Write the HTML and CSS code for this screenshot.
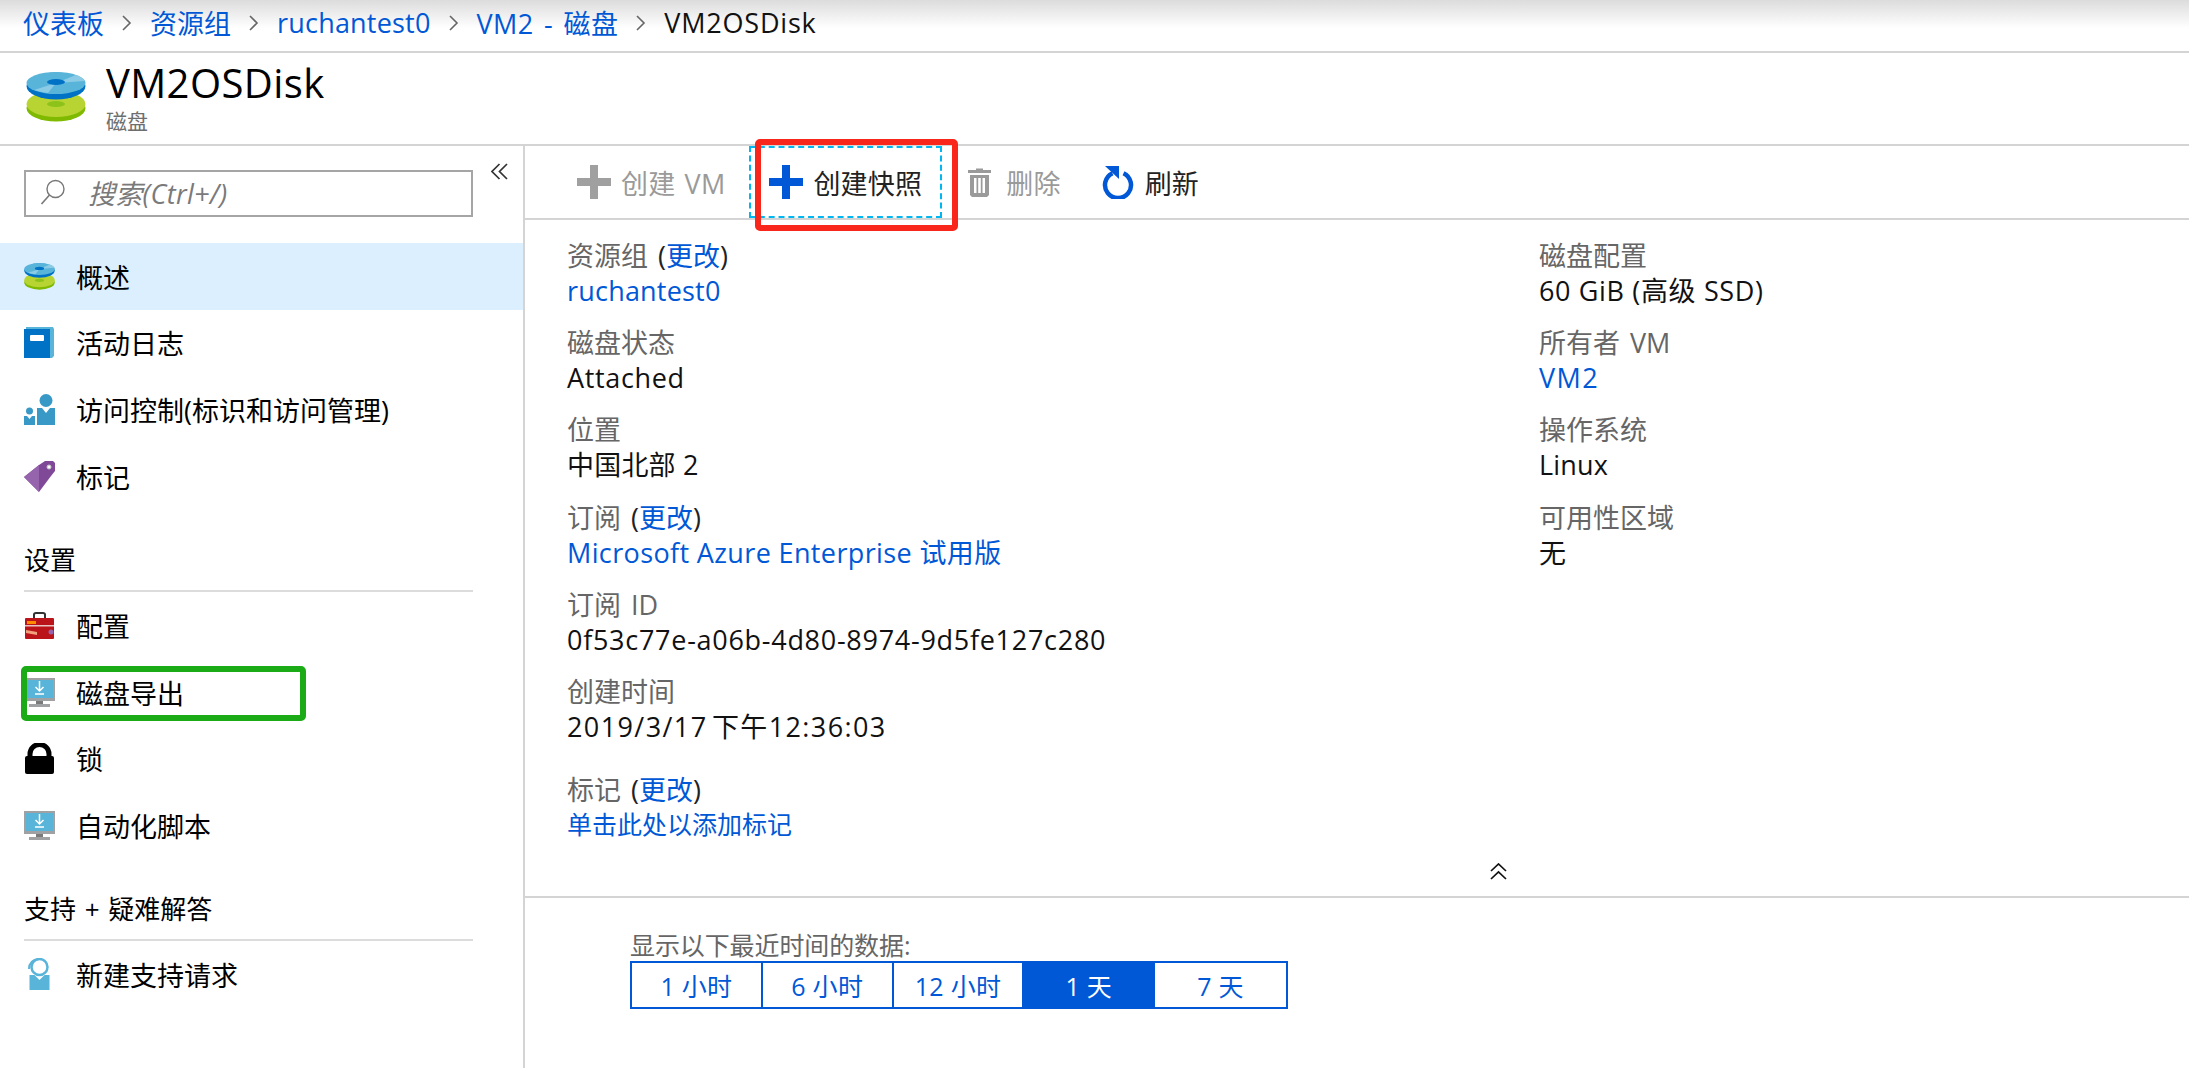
FILE: index.html
```html
<!DOCTYPE html>
<html lang="zh-CN">
<head>
<meta charset="utf-8">
<title>VM2OSDisk</title>
<link rel="stylesheet" href="styles.css">
</head>
<body>
<svg class="defs" width="0" height="0" aria-hidden="true">
  <symbol id="i-disk" viewBox="0 0 60 50">
    <ellipse cx="30" cy="36" rx="29.5" ry="13.5" fill="#7fba00"/>
    <ellipse cx="30" cy="32" rx="29.5" ry="13" fill="#b8d432"/>
    <ellipse cx="30" cy="32" rx="9" ry="3" fill="#8cc21a"/>
    <ellipse cx="30" cy="14" rx="29.5" ry="13.5" fill="#0072c6"/>
    <ellipse cx="30" cy="11" rx="29.5" ry="11" fill="#59b4d9"/>
    <path d="M30 11 50 3a30 11 0 0 1 9 6zM30 11 8 18a30 11 0 0 0 14 3z" fill="#8bcbe6"/>
    <ellipse cx="30" cy="10" rx="9" ry="3" fill="#0072c6"/>
  </symbol>
  <symbol id="i-monitor" viewBox="0 0 31 29">
    <rect width="31" height="23" fill="#a0a1a2"/>
    <rect x="2" y="2" width="27" height="18" fill="#59b4d9"/>
    <path d="M15.5 3v9M11.5 9l4 4 4-4M11 16h9" fill="none" stroke="#fff" stroke-width="1.5"/>
    <rect x="12" y="23" width="7" height="3" fill="#7a7a7a"/>
    <rect x="5" y="26" width="21" height="3" fill="#a0a1a2"/>
  </symbol>
</svg>
<div class="page">
  <nav class="crumbs">
    <a>仪表板</a><span class="sep"><svg width="10" height="16" viewBox="0 0 10 16"><path d="M1 1l7 7-7 7" fill="none" stroke="#666" stroke-width="1.6"/></svg></span>
    <a>资源组</a><span class="sep"><svg width="10" height="16" viewBox="0 0 10 16"><path d="M1 1l7 7-7 7" fill="none" stroke="#666" stroke-width="1.6"/></svg></span>
    <a class="latin">ruchantest0</a><span class="sep"><svg width="10" height="16" viewBox="0 0 10 16"><path d="M1 1l7 7-7 7" fill="none" stroke="#666" stroke-width="1.6"/></svg></span>
    <a class="mixed">VM2 - 磁盘</a><span class="sep"><svg width="10" height="16" viewBox="0 0 10 16"><path d="M1 1l7 7-7 7" fill="none" stroke="#666" stroke-width="1.6"/></svg></span>
    <span class="current">VM2OSDisk</span>
  </nav>
  <header class="head">
    <svg class="head-icon" width="60" height="50"><use href="#i-disk"/></svg>
    <div class="head-text">
      <h1>VM2OSDisk</h1>
      <div class="sub">磁盘</div>
    </div>
  </header>
  <div class="main">
    <aside class="side">
      <div class="search-row">
        <div class="search">
          <svg width="26" height="26" viewBox="0 0 26 26"><circle cx="15.5" cy="10" r="8.5" fill="none" stroke="#777" stroke-width="1.4"/><path d="M9.5 16 1.5 25" stroke="#777" stroke-width="1.6"/></svg>
          <span>搜索(Ctrl+/)</span>
        </div>
        <svg class="collapse" width="17" height="17" viewBox="0 0 17 17"><path d="M8.5 1 1 8.5 8.5 16M16 1 8.5 8.5 16 16" fill="none" stroke="#333" stroke-width="1.7"/></svg>
      </div>
      <ul class="menu">
        <li class="active"><svg class="mi" width="31" height="27" viewBox="0 0 60 50" preserveAspectRatio="none"><use href="#i-disk"/></svg>概述</li>
        <li><svg class="mi" width="31" height="31" viewBox="0 0 31 31"><path d="M2 0h27l1 2v27l-2 2H2z" fill="#59b4d9"/><path d="M0 2h26v29H0z" fill="#0072c6"/><rect x="6" y="8" width="14" height="6" rx="1" fill="#fff"/></svg>活动日志</li>
        <li><svg class="mi" width="31" height="31" viewBox="0 0 31 31"><circle cx="22" cy="6.500" r="6.500" fill="#3999c6"/><path d="M13 14h5l4 5 4-5h5v17H13z" fill="#3999c6"/><circle cx="5.500" cy="17" r="3.500" fill="#3999c6"/><path d="M0 22h3l2.500 3 2.500-3h3v9H0z" fill="#3999c6"/></svg>访问控制(标识和访问管理)</li>
        <li><svg class="mi" width="31" height="31" viewBox="0 0 31 31"><path d="M15 31 0 16 15 4 21 0h8l2 2v8l-4 5z" fill="#804998"/><path d="M15 31 0 16 15 4z" fill="#9664ad"/><circle cx="25" cy="6" r="2" fill="#fff" stroke="#c5c5c5"/></svg>标记</li>
      </ul>
      <h2 class="group">设置</h2>
      <ul class="menu">
        <li><svg class="mi" width="31" height="27" viewBox="0 0 31 27"><path d="M10 7V2.500Q10 1 12 1h7q2 0 2 1.500V7" fill="none" stroke="#333" stroke-width="2"/><rect x="1" y="6" width="29" height="21" rx="1" fill="#ba141a"/><rect x="1" y="13" width="29" height="1.500" fill="#e8c3c4"/><rect x="3" y="9" width="9" height="3" fill="#ff8c00"/><path d="M2 18l11 2v3L2 21z" fill="#f2a07b"/><circle cx="27" cy="20" r="2.500" fill="#9664ad"/></svg>配置</li>
        <li><svg class="mi" width="31" height="29"><use href="#i-monitor"/></svg>磁盘导出</li>
        <li><svg class="mi" width="31" height="31" viewBox="0 0 31 31"><path d="M6 15V11a9.500 9.500 0 0 1 19 0v4" fill="none" stroke="#000" stroke-width="5"/><rect x="1" y="13" width="29" height="18" rx="2" fill="#000"/></svg>锁</li>
        <li><svg class="mi" width="31" height="29"><use href="#i-monitor"/></svg>自动化脚本</li>
      </ul>
      <h2 class="group group-b">支持 + 疑难解答</h2>
      <ul class="menu">
        <li><svg class="mi" width="31" height="32" viewBox="0 0 31 32"><circle cx="15.500" cy="9" r="8" fill="none" stroke="#59b4d9" stroke-width="2.500"/><path d="M5 11q0-9 10-10" fill="none" stroke="#59b4d9" stroke-width="2"/><path d="M5.500 17h5l5 5 5-5h5v15h-20z" fill="#59b4d9"/></svg>新建支持请求</li>
      </ul>
    </aside>
    <main class="content">
      <div class="cmdbar">
        <div class="cmd off"><svg width="34" height="34" viewBox="0 0 34 34"><path d="M13 0h8v13h13v8H21v13h-8V21H0v-8h13z" fill="#a0a0a0"/></svg>创建 VM</div>
        <div class="cmd on"><svg width="34" height="34" viewBox="0 0 34 34"><path d="M13 0h8v13h13v8H21v13h-8V21H0v-8h13z" fill="#0058d6"/></svg>创建快照</div>
        <div class="cmd off trash"><svg width="23" height="29" viewBox="0 0 23 29"><path d="M8 2V.5h7V2h8v3H0V2zM2 7h19v20l-2 2H4l-2-2zM6 10v15h2.500V10zM10.200 10v15h2.600V10zM14.500 10v15H17V10z" fill="#9a9a9a" fill-rule="evenodd"/></svg>删除</div>
        <div class="cmd"><svg width="33" height="34" viewBox="0 0 33 34"><path d="M21.500 8.300a13 13 0 1 1-11 0" fill="none" stroke="#0058d6" stroke-width="4.500"/><path d="M3 1h14v13z" fill="#0058d6"/></svg>刷新</div>
      </div>
      <section class="details">
        <div class="col">
          <div class="field"><div class="lbl">资源组 <span class="paren">(<a>更改</a>)</span></div><a class="val tight">ruchantest0</a></div>
          <div class="field"><div class="lbl">磁盘状态</div><div class="val">Attached</div></div>
          <div class="field"><div class="lbl">位置</div><div class="val tight">中国北部 2</div></div>
          <div class="field"><div class="lbl">订阅 <span class="paren">(<a>更改</a>)</span></div><a class="val mid">Microsoft Azure Enterprise 试用版</a></div>
          <div class="field"><div class="lbl">订阅 ID</div><div class="val guid">0f53c77e-a06b-4d80-8974-9d5fe127c280</div></div>
          <div class="field"><div class="lbl">创建时间</div><div class="val wide">2019/3/17 下午12:36:03</div></div>
          <div class="field tags"><div class="lbl">标记 <span class="paren">(<a>更改</a>)</span></div><a class="val small">单击此处以添加标记</a></div>
        </div>
        <div class="col">
          <div class="field"><div class="lbl">磁盘配置</div><div class="val">60 GiB (高级 SSD)</div></div>
          <div class="field"><div class="lbl">所有者 VM</div><a class="val wide">VM2</a></div>
          <div class="field"><div class="lbl">操作系统</div><div class="val tight">Linux</div></div>
          <div class="field"><div class="lbl">可用性区域</div><div class="val tight">无</div></div>
        </div>
      </section>
      <div class="fold"><svg width="17" height="17" viewBox="0 0 17 17"><path d="M1 8 8.500 1 16 8M1 16 8.500 9 16 16" fill="none" stroke="#111" stroke-width="1.700"/></svg></div>
      <section class="range">
        <div class="range-lbl">显示以下最近时间的数据:</div>
        <div class="range-btns">
          <div class="rb">1 小时</div>
          <div class="rb">6 小时</div>
          <div class="rb">12 小时</div>
          <div class="rb sel">1 天</div>
          <div class="rb">7 天</div>
        </div>
      </section>
    </main>
  </div>
  <div class="mark mark-green"></div>
  <div class="mark mark-red"></div>
</div>
</body>
</html>
```
FILE: styles.css
```css
* { box-sizing: border-box; }
html, body { margin: 0; height: 100%; }
body {
  font-family: "Open Sans", "Noto Sans CJK SC", sans-serif;
  font-size: 27px;
  color: #000;
  background: #fff;
  overflow: hidden;
}
.defs { position: absolute; }
a { color: #0058d6; text-decoration: none; }
ul { list-style: none; margin: 0; padding: 0; }
h1, h2 { margin: 0; font-weight: 400; }

.page { position: relative; width: 2189px; height: 1068px; display: flex; flex-direction: column; overflow: hidden; }

.crumbs {
  height: 53px;
  flex: none;
  display: flex;
  align-items: center;
  padding: 0 0 6px 23px;
  border-bottom: 2px solid #d4d4d4;
  background: linear-gradient(#dcdcdc, #fff 55%);
  white-space: nowrap;
}
.sep { display: flex; margin: 0 18px; }
.crumbs .latin { letter-spacing: 0.2px; }
.crumbs .mixed { letter-spacing: 0.4px; word-spacing: 3px; }
.crumbs .current { color: #111; letter-spacing: 0.8px; }

.head {
  height: 91px;
  flex: none;
  display: flex;
  align-items: flex-start;
  gap: 20px;
  padding: 19px 0 0 26px;
}
.head-icon { flex: none; }
.head-text { margin-top: -13px; }
.head h1 { font-size: 40px; line-height: 48px; letter-spacing: 0.4px; color: #000; }
.sub { font-size: 21px; line-height: 28px; color: #6e6e6e; }

.main { flex: 1; display: flex; border-top: 2px solid #d4d4d4; min-height: 0; }

.side { width: 525px; flex: none; border-right: 2px solid #d4d4d4; }
.search-row { display: flex; gap: 18px; padding: 24px 0 26px 24px; align-items: flex-start; }
.search {
  width: 449px;
  height: 47px;
  border: 2px solid #a5a5a5;
  display: flex;
  align-items: center;
  padding: 0 0 3px 14px;
  gap: 22px;
  font-style: italic;
  color: #7a7a7a;
  font-size: 27px;
  letter-spacing: 0.3px;
}
.collapse { margin-top: -7px; }

.menu li {
  height: 66.6px;
  display: flex;
  align-items: center;
  padding-left: 24px;
  white-space: nowrap;
}
.menu .active { background: #dcefff; }
.mi { width: 31px; flex: none; margin-right: 21px; }

.group {
  font-size: 26px;
  line-height: 36px;
  margin: 33px 50px 0 24px;
  padding-bottom: 12px;
  border-bottom: 2px solid #dcdcdc;
  word-spacing: 2px;
}
.group-b { margin-top: 32px; }

.content { flex: 1; min-width: 0; display: flex; flex-direction: column; }

.cmdbar {
  height: 74px;
  flex: none;
  display: flex;
  align-items: center;
  padding-left: 32px;
  gap: 4px;
  border-bottom: 2px solid #d4d4d4;
}
.cmd {
  height: 72px;
  display: flex;
  align-items: center;
  gap: 10px;
  padding: 0 20px;
  color: #222;
  word-spacing: 2px;
  letter-spacing: 0.2px;
  white-space: nowrap;
}
.cmd.off { color: #9a9a9a; }
.cmd.on { outline: 2px dashed #00b7f1; outline-offset: -2px; }
.cmd.trash { padding: 0 17px 0 22px; gap: 15px; }

.details { flex: none; display: flex; padding: 18px 0 0 42px; }
.col { flex: 0 0 972px; }
.col + .col { flex: 1; }
.field { line-height: 35px; margin-bottom: 17.2px; }
.lbl { color: #666; word-spacing: 3px; }
.paren { color: #222; }
.val { display: block; color: #111; letter-spacing: 0.65px; white-space: nowrap; }
a.val { color: #0058d6; }
.val.tight { letter-spacing: 0.2px; }
.val.mid { letter-spacing: 0.37px; }
.val.guid { letter-spacing: 0.72px; }
.val.wide { letter-spacing: 1.4px; word-spacing: -4px; }
.val.small { font-size: 25px; letter-spacing: 0; }
.tags { margin-top: 28px; margin-bottom: 0; }

.fold {
  flex: none;
  display: flex;
  padding: 21px 0 0 965px;
  height: 56px;
  border-bottom: 2px solid #d4d4d4;
}
.range { padding: 32px 0 0 105px; }
.range-lbl { font-size: 25px; line-height: 31px; color: #666; letter-spacing: -0.1px; }
.range-btns {
  display: grid;
  grid-template-columns: repeat(5, 1fr);
  width: 658px;
  height: 48px;
  border: 2px solid #0058d6;
  color: #0058d6;
  font-size: 25px;
  letter-spacing: 0.3px;
}
.rb { display: flex; align-items: center; justify-content: center; border-right: 2px solid #0058d6; }
.rb:last-child { border-right: 0; }
.rb.sel { background: #0058d6; color: #fff; }

.mark { position: absolute; pointer-events: none; border-radius: 5px; }
.mark-green { left: 21px; top: 666px; width: 285px; height: 55px; border: 6px solid #1aab17; }
.mark-red { left: 755px; top: 139px; width: 203px; height: 92px; border: 6px solid #f9261b; }
```
